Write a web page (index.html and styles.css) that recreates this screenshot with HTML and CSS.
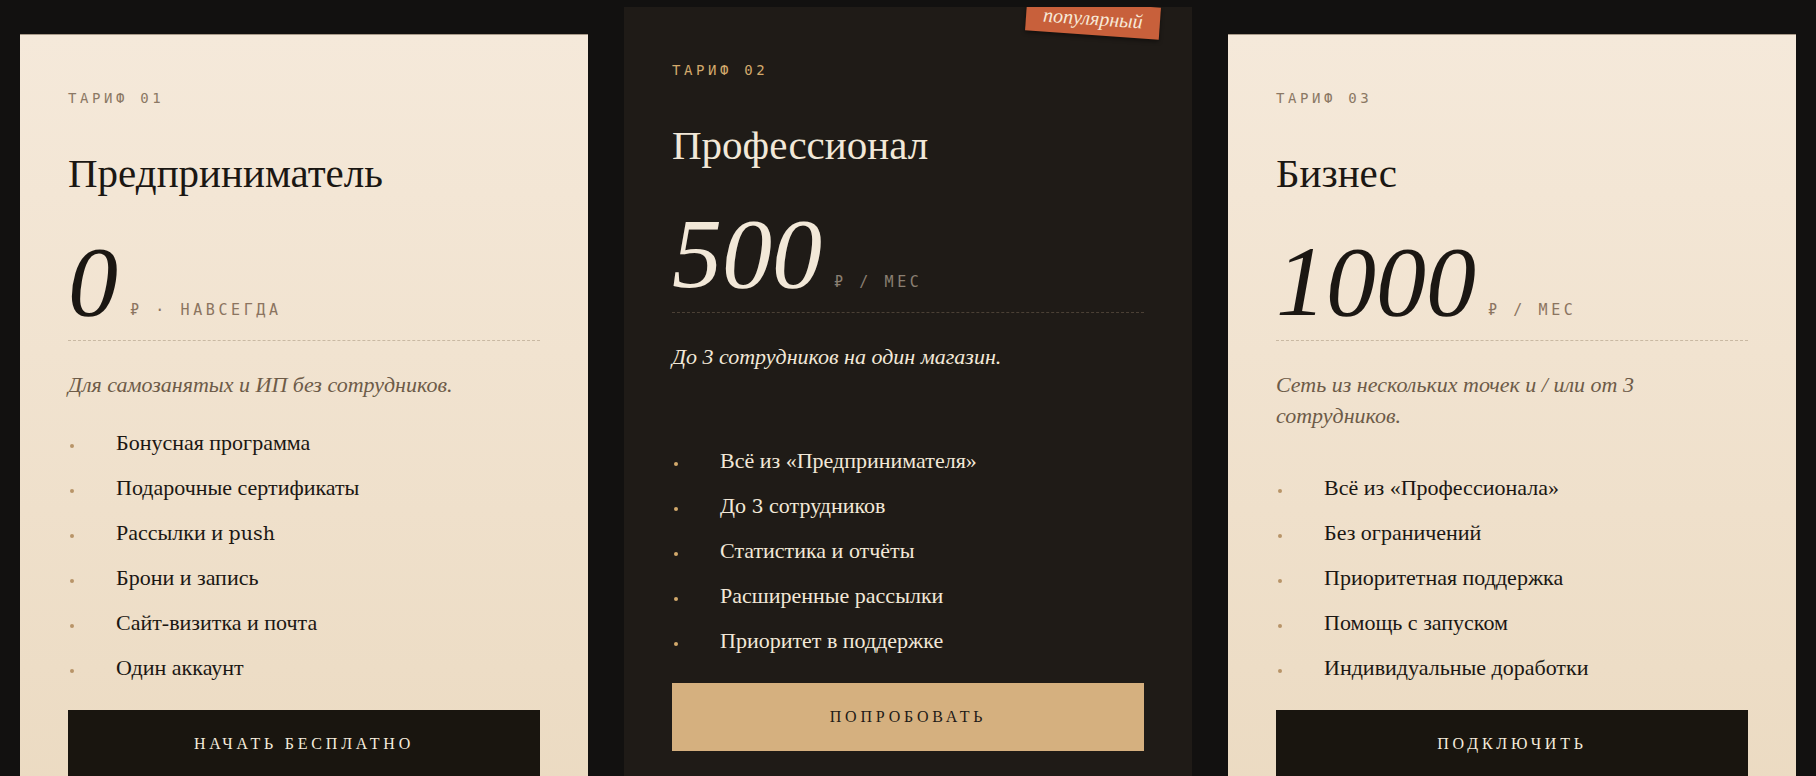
FILE: index.html
```html
<!DOCTYPE html>
<html lang="ru">
<head>
    <meta charset="UTF-8">
    <meta name="viewport" content="width=device-width, initial-scale=1.0">
    <title>Тарифы</title>
    <link rel="stylesheet" href="styles.css">
</head>
<body>
    <section class="plans">
        <div class="plan">
            <div class="plan-tag">ТАРИФ 01</div>
            <h2 class="plan-name">Предприниматель</h2>
            <div class="plan-price">
                <span class="amount">0</span>
                <span class="unit">₽ · НАВСЕГДА</span>
            </div>
            <p class="plan-desc">Для самозанятых и ИП без сотрудников.</p>
            <ul class="plan-list">
                <li>Бонусная программа</li>
                <li>Подарочные сертификаты</li>
                <li>Рассылки и <span class="lat">push</span></li>
                <li>Брони и запись</li>
                <li>Сайт-визитка и почта</li>
                <li>Один аккаунт</li>
            </ul>
            <button class="plan-btn">Начать бесплатно</button>
        </div>

        <div class="plan featured">
            <div class="badge">популярный</div>
            <div class="plan-tag">ТАРИФ 02</div>
            <h2 class="plan-name">Профессионал</h2>
            <div class="plan-price">
                <span class="amount">500</span>
                <span class="unit">₽ / МЕС</span>
            </div>
            <p class="plan-desc">До 3 сотрудников на один магазин.</p>
            <ul class="plan-list">
                <li>Всё из «Предпринимателя»</li>
                <li>До <span class="lat">3</span> сотрудников</li>
                <li>Статистика и отчёты</li>
                <li>Расширенные рассылки</li>
                <li>Приоритет в поддержке</li>
            </ul>
            <button class="plan-btn">Попробовать</button>
        </div>

        <div class="plan">
            <div class="plan-tag">ТАРИФ 03</div>
            <h2 class="plan-name">Бизнес</h2>
            <div class="plan-price">
                <span class="amount">1000</span>
                <span class="unit">₽ / МЕС</span>
            </div>
            <p class="plan-desc">Сеть из нескольких точек и / или от 3 сотрудников.</p>
            <ul class="plan-list">
                <li>Всё из «Профессионала»</li>
                <li>Без ограничений</li>
                <li>Приоритетная поддержка</li>
                <li>Помощь с запуском</li>
                <li>Индивидуальные доработки</li>
            </ul>
            <button class="plan-btn">Подключить</button>
        </div>
    </section>
</body>
</html>
```

FILE: styles.css
```css
body {
    margin: 0;
    background: #121110;
    font-family: "Liberation Serif", "Times New Roman", serif;
    color: #1b1713;
}

.plans {
    display: grid;
    grid-template-columns: repeat(3, 1fr);
    gap: 36px;
    padding: 34px 20px 0;
}

.plan {
    position: relative;
    overflow: hidden;
    display: flex;
    flex-direction: column;
    padding: 55px 48px 48px;
    background: linear-gradient(180deg, #f5e9da 0%, #ebdac1 100%);
    border-top: 1px solid #a89a89;
}

.plan-tag {
    font-family: "DejaVu Sans Mono", monospace;
    font-size: 14px;
    line-height: 16px;
    letter-spacing: 3.6px;
    color: #8b7864;
}

.plan-name {
    margin: 43px 0 0;
    font-size: 41px;
    font-weight: normal;
    line-height: 48px;
}

.plan-price {
    display: flex;
    align-items: baseline;
    margin-top: 35px;
    padding-bottom: 8px;
    border-bottom: 1px dashed #c9b9a3;
}

.amount {
    font-size: 100px;
    font-style: italic;
    line-height: 1;
}

.unit {
    margin-left: 12px;
    font-family: "DejaVu Sans Mono", monospace;
    font-size: 15px;
    letter-spacing: 3.6px;
    color: #8b7460;
}

.plan-desc {
    margin: 28px 0 0;
    font-size: 22px;
    font-style: italic;
    line-height: 31px;
    color: #6d5b48;
}

.plan-list {
    list-style: none;
    margin: auto 0 0;
    padding: 28px 0 0;
}

.plan-list li {
    position: relative;
    padding-left: 48px;
    font-size: 22px;
    line-height: 30px;
    margin-bottom: 15px;
}

.plan-list li:last-child {
    margin-bottom: 0;
}

.plan-list li::before {
    content: "";
    position: absolute;
    left: 2px;
    top: 16px;
    width: 4px;
    height: 4px;
    border-radius: 50%;
    background: #b89468;
}

.lat {
    font-family: "DejaVu Serif", serif;
    font-size: 19px;
}

.plan-btn {
    margin-top: 27px;
    padding: 25px 0;
    border: none;
    background: #19150f;
    color: #f5ebdc;
    font-family: "Liberation Serif", serif;
    font-size: 16px;
    line-height: 18px;
    letter-spacing: 3.8px;
    text-transform: uppercase;
    cursor: pointer;
}

/* middle card */
.featured {
    background: #1f1b17;
    border-top: none;
    transform: translateY(-27px);
    color: #f2e8d8;
}

.featured .plan-tag {
    color: #d3a96c;
}

.featured .unit {
    color: #8a7f72;
}

.featured .plan-price {
    border-bottom-color: #4b4035;
}

.featured .plan-desc {
    color: #f2e8d8;
}

.featured .plan-list li::before {
    background: #d3a96c;
}

.featured .plan-btn {
    background: #d5b07f;
    color: #1f1b17;
}

.badge {
    position: absolute;
    top: -4px;
    right: 32px;
    padding: 3px 17px 5px;
    background: #c8603b;
    color: #f7e9d8;
    font-size: 20px;
    font-style: italic;
    line-height: 24px;
    transform: rotate(4deg);
    box-shadow: 0 2px 4px rgba(0, 0, 0, 0.45);
}
```
